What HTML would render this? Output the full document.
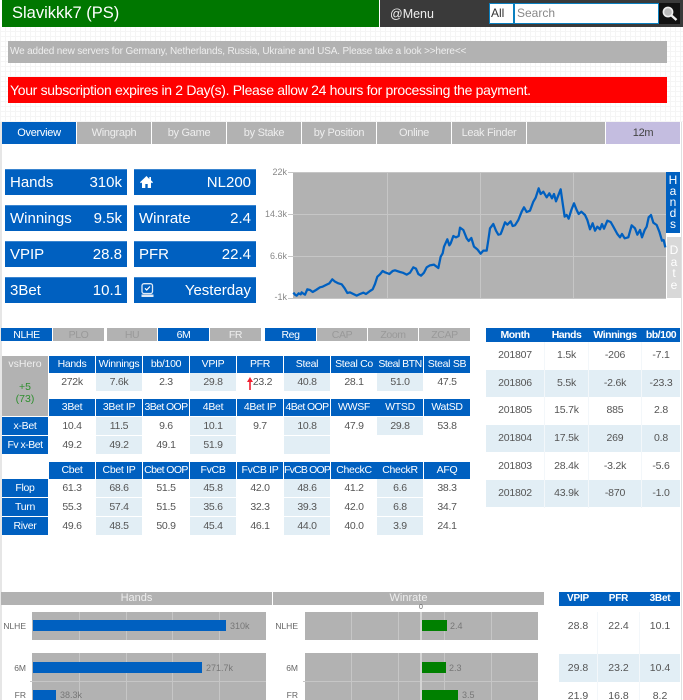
<!DOCTYPE html>
<html><head><meta charset="utf-8"><title>Slavikkk7 (PS)</title>
<style>
html,body{margin:0;padding:0;background:#fff}
body{width:683px;height:700px;position:relative;overflow:hidden;background:#fff;font-family:"Liberation Sans",sans-serif;color:#555}
#w{position:absolute;left:0;top:0;width:683px;height:700px;overflow:hidden;filter:blur(.3px)}
div{position:absolute;box-sizing:border-box;white-space:nowrap}
.tab{top:122px;height:22px;width:74px;background:#b2b2b2;color:#eee;font-size:11px;letter-spacing:-.3px;line-height:22px;text-align:center}
.st{width:122px;height:26px;background:#0060c0;color:#fff;font-size:15px;line-height:26px;padding:0 5px;border-top:1px solid #3a85d0}
.st i{position:absolute;right:5px;font-style:normal}
.f{top:328px;height:13px;width:51px;background:#0060c0;color:#fff;font-size:10.5px;letter-spacing:-.4px;line-height:14px;text-align:center}
.f.o{background:#b2b2b2;color:#999}
.h{height:17px;line-height:17px;width:46px;background:#0060c0;color:#fff;font-size:10.5px;letter-spacing:-.3px;text-align:center}
.v{height:18px;line-height:19px;width:46px;font-size:10.5px;letter-spacing:-.3px;text-align:center;color:#555}
.s{background:#e2eef5}
.l{left:2px;width:46px;height:18px;line-height:18px;background:#0060c0;color:#fff;font-size:10.5px;letter-spacing:-.3px;text-align:center}
.c0{left:49px}.c1{left:96px}.c2{left:143px}.c3{left:190px}.c4{left:237px}.c5{left:284px}.c6{left:331px}.c7{left:377px}.c8{left:424px}
.a{top:356px}.b{top:373px}.d{top:399px}.e{top:417px}.g{top:436px}.j{top:462px}.k{top:479px}.m{top:498px}.n{top:517px}
.y{font-size:9px;color:#888;text-align:right;width:30px;left:257px;line-height:10px;height:10px}
.tr{left:486px;width:194px;height:27px}
.tv{font-size:10.5px;letter-spacing:-.2px;line-height:27px;height:27px;text-align:center;color:#555}
.th{top:328px;height:14px;line-height:14px;color:#fff;font-size:10.5px;letter-spacing:-.5px;font-weight:bold;text-align:center}
.x0{left:486px;width:58px}.x1{left:545px;width:43px}.x2{left:589px;width:52px}.x3{left:642px;width:38px}
.lb{font-size:8.5px;color:#666;line-height:10px;height:10px;text-align:right}
.val{font-size:9px;color:#777;line-height:10px;height:10px}
.p{background:#b2b2b2}
.gr{background:#c6c6c6;width:1px}
.mh{top:592px;height:14px;line-height:14px;color:#fff;font-size:10px;letter-spacing:-.2px;font-weight:bold;text-align:center}
.mv{font-size:10.5px;color:#555;text-align:center}
.vt{width:14px;color:#fff;font-size:12px;text-align:center;white-space:normal}
.bh{top:592px;width:271px;height:13px;background:#b2b2b2;color:#eee;font-size:11px;line-height:13px;text-align:center}
</style></head><body><div id="w">
<div style="left:0;top:27px;width:683px;height:95px;background-color:#fff;background-image:repeating-linear-gradient(0deg,#f5f5f5 0 1px,transparent 1px 5px),repeating-linear-gradient(90deg,#f5f5f5 0 1px,transparent 1px 5px)"></div>
<div style="left:0;top:122px;width:2px;height:578px;background:#e6e6e6"></div>
<div style="left:681px;top:122px;width:1px;height:578px;background:#e0e0e0"></div>

<div style="left:2px;top:0;width:377px;height:27px;background:#007700;color:#fff;font-size:16.5px;line-height:27px;padding-left:10px">Slavikkk7 (PS)</div>
<div style="left:380px;top:0;width:303px;height:27px;background:#3a3a3a"></div>
<div style="left:390px;top:0;color:#eee;font-size:12.5px;line-height:28px">@Menu</div>
<div style="left:489px;top:3px;width:25px;height:21px;background:#fff;border:1px solid #0a80c0;color:#333;font-size:12px;line-height:19px;padding-left:1px">All</div>
<div style="left:514px;top:3px;width:145px;height:21px;background:#fff;border:1px solid #0a80c0;color:#888;font-size:12px;line-height:19px;padding-left:2px">Search</div>
<div style="left:659px;top:3px;width:21px;height:21px;background:#111"></div>
<svg style="position:absolute;left:659px;top:3px" width="21" height="21"><circle cx="9" cy="9" r="4.6" fill="#bbb" stroke="#eee" stroke-width="1.6"/><path d="M12.5 12.5L17.5 17" stroke="#eee" stroke-width="2.4"/></svg>

<div style="left:8px;top:41px;width:659px;height:22px;background:#b2b2b2;color:#eee;font-size:10px;letter-spacing:-.155px;line-height:22px;padding-left:2px">We added new servers for Germany, Netherlands, Russia, Ukraine and USA. Please take a look &gt;&gt;here&lt;&lt;</div>
<div style="left:8px;top:77px;width:659px;height:26px;background:#f00;color:#fff;font-size:14px;letter-spacing:-.32px;line-height:26px;padding-left:2px">Your subscription expires in 2 Day(s). Please allow 24 hours for processing the payment.</div>

<div class="tab" style="left:2px;background:#0060c0;color:#fff">Overview</div>
<div class="tab" style="left:77px">Wingraph</div>
<div class="tab" style="left:152px">by Game</div>
<div class="tab" style="left:227px">by Stake</div>
<div class="tab" style="left:302px">by Position</div>
<div class="tab" style="left:377px">Online</div>
<div class="tab" style="left:452px">Leak Finder</div>
<div class="tab" style="left:527px;width:78px"></div>
<div class="tab" style="left:606px;background:#c4bde0;color:#444">12m</div>

<div class="st" style="left:5px;top:169px">Hands<i>310k</i></div>
<div class="st" style="left:134px;top:169px"><i>NL200</i></div>
<svg style="position:absolute;left:139px;top:175px" width="15" height="14" viewBox="0 0 15 14"><path d="M7.5 1L1 7.3l1 1L3 7.4V13h3.3V9h2.4v4H12V7.4l1 .9 1-1-2-2V2h-1.700v2L7.500 1z" fill="#fff"/></svg>
<div class="st" style="left:5px;top:205px">Winnings<i>9.5k</i></div>
<div class="st" style="left:134px;top:205px">Winrate<i>2.4</i></div>
<div class="st" style="left:5px;top:241px">VPIP<i>28.8</i></div>
<div class="st" style="left:134px;top:241px">PFR<i>22.4</i></div>
<div class="st" style="left:5px;top:277px">3Bet<i>10.1</i></div>
<div class="st" style="left:134px;top:277px"><i>Yesterday</i></div>
<svg style="position:absolute;left:140px;top:283px" width="15" height="15" viewBox="0 0 15 15"><rect x="2" y=".7" width="10.500" height="9.800" rx="2" fill="none" stroke="#dfe9f5" stroke-width="1.300"/><path d="M5 5.300l1.700 1.700L10 3.500" fill="none" stroke="#fff" stroke-width="1.200"/><path d="M1.500 11.500h12v2.500h-12z" fill="#dfe9f5"/></svg>

<div class="p" style="left:293px;top:173px;width:373px;height:125px"></div>
<div class="gr" style="left:387px;top:173px;height:125px"></div>
<div class="gr" style="left:480px;top:173px;height:125px"></div>
<div class="gr" style="left:573px;top:173px;height:125px"></div>
<div class="gr" style="left:288px;top:214px;height:1px;width:378px"></div>
<div class="gr" style="left:288px;top:256px;height:1px;width:378px"></div>
<div class="gr" style="left:288px;top:172px;height:1px;width:378px"></div>
<div class="gr" style="left:288px;top:298px;height:1px;width:378px"></div>
<div class="y" style="top:167px">22k</div>
<div class="y" style="top:209px">14.3k</div>
<div class="y" style="top:251px">6.6k</div>
<div class="y" style="top:292px">-1k</div>
<svg style="position:absolute;left:270px;top:160px" width="413" height="150" viewBox="0 0 1239 450"><polyline fill="none" stroke="#0060c0" stroke-width="6.800" stroke-linejoin="round" points="70,398 76,405 80,407 86,400 92,403 95,397 100,401 105,404 112,388 120,390 128,396 138,390 150,382 158,380 170,374 178,370 187,358 195,365 205,370 215,373 224,385 232,399 240,397 250,402 260,407 270,402 280,398 288,402 300,393 308,388 315,372 322,350 330,343 338,333 345,337 358,342 368,333 375,331 390,336 398,338 410,344 420,338 430,322 438,326 445,342 453,347 462,338 470,322 480,316 492,314 505,324 512,290 518,280 522,260 532,238 538,256 542,250 550,228 558,232 566,228 570,203 580,210 590,235 596,243 604,234 612,260 622,268 632,281 640,272 650,272 655,240 660,205 670,192 678,212 685,224 692,222 696,212 705,187 712,194 722,184 728,198 735,196 745,180 755,155 762,142 770,156 780,152 790,125 797,113 806,85 812,102 820,95 830,112 838,100 846,115 852,102 858,124 872,88 878,130 884,170 890,165 896,176 904,150 912,130 920,150 926,162 934,155 945,165 952,180 960,208 968,190 975,212 982,200 990,208 996,192 1002,206 1012,182 1022,186 1030,200 1042,222 1050,232 1056,222 1064,235 1075,232 1085,196 1095,205 1102,224 1110,210 1116,232 1124,210 1130,200 1136,172 1143,165 1150,188 1160,195 1168,215 1176,242 1181,240 1186,262"/></svg>
<div class="vt" style="left:666px;top:172px;height:61px;background:#0060c0;padding-top:3px;line-height:11px">H<br>a<br>n<br>d<br>s</div>
<div class="vt" style="left:667px;top:237px;height:61px;background:#d8d8d8;padding-top:8px;line-height:11.7px">D<br>a<br>t<br>e</div>

<div class="f" style="left:1px">NLHE</div><div class="f o" style="left:53px">PLO</div>
<div class="f o" style="left:107px;width:50px">HU</div><div class="f" style="left:158px">6M</div><div class="f o" style="left:210px;color:#eee">FR</div>
<div class="f" style="left:265px">Reg</div><div class="f o" style="left:317px;width:50px">CAP</div><div class="f o" style="left:368px;width:50px">Zoom</div><div class="f o" style="left:419px">ZCAP</div>

<div style="left:2px;top:356px;width:46px;height:60px;background:#b2b2b2;color:#eee;font-size:10.5px;text-align:center;line-height:16px">vsHero</div>
<div style="left:2px;top:381px;width:46px;color:#2f8f2f;font-size:10.5px;text-align:center;line-height:12px">+5<br>(73)</div>

<div class="h a c0">Hands</div><div class="h a c1">Winnings</div><div class="h a c2">bb/100</div><div class="h a c3">VPIP</div><div class="h a c4">PFR</div><div class="h a c5">Steal</div><div class="h a c6">Steal Co</div><div class="h a c7" style="letter-spacing:-.5px">Steal BTN</div><div class="h a c8">Steal SB</div>
<div class="v b c0">272k</div><div class="v b c1 s">7.6k</div><div class="v b c2">2.3</div><div class="v b c3 s">29.8</div><div class="v b c4" style="padding-left:5px">23.2</div><div class="v b c5 s">40.8</div><div class="v b c6">28.1</div><div class="v b c7 s">51.0</div><div class="v b c8">47.5</div>
<svg style="position:absolute;left:246px;top:376px" width="8" height="14" viewBox="0 0 8 14"><path d="M4 1L1 6h2.200v8h1.600V6H7z" fill="#f02030"/></svg>

<div class="h d c0">3Bet</div><div class="h d c1">3Bet IP</div><div class="h d c2" style="letter-spacing:-.6px">3Bet OOP</div><div class="h d c3">4Bet</div><div class="h d c4">4Bet IP</div><div class="h d c5" style="letter-spacing:-.6px">4Bet OOP</div><div class="h d c6">WWSF</div><div class="h d c7">WTSD</div><div class="h d c8">WatSD</div>
<div class="l e">x-Bet</div><div class="v e c0">10.4</div><div class="v e c1 s">11.5</div><div class="v e c2">9.6</div><div class="v e c3 s">10.1</div><div class="v e c4">9.7</div><div class="v e c5 s">10.8</div><div class="v e c6">47.9</div><div class="v e c7 s">29.8</div><div class="v e c8">53.8</div>
<div class="l g" style="letter-spacing:-.5px">Fv x-Bet</div><div class="v g c0">49.2</div><div class="v g c1 s">49.2</div><div class="v g c2">49.1</div><div class="v g c3 s">51.9</div><div class="v g c5 s"></div>

<div class="h j c0">Cbet</div><div class="h j c1">Cbet IP</div><div class="h j c2" style="letter-spacing:-.6px">Cbet OOP</div><div class="h j c3">FvCB</div><div class="h j c4">FvCB IP</div><div class="h j c5" style="letter-spacing:-.8px">FvCB OOP</div><div class="h j c6">CheckC</div><div class="h j c7">CheckR</div><div class="h j c8">AFQ</div>
<div class="l k">Flop</div><div class="v k c0">61.3</div><div class="v k c1 s">68.6</div><div class="v k c2">51.5</div><div class="v k c3 s">45.8</div><div class="v k c4">42.0</div><div class="v k c5 s">48.6</div><div class="v k c6">41.2</div><div class="v k c7 s">6.6</div><div class="v k c8">38.3</div>
<div class="l m">Turn</div><div class="v m c0">55.3</div><div class="v m c1 s">57.4</div><div class="v m c2">51.5</div><div class="v m c3 s">35.6</div><div class="v m c4">32.3</div><div class="v m c5 s">39.3</div><div class="v m c6">42.0</div><div class="v m c7 s">6.8</div><div class="v m c8">34.7</div>
<div class="l n">River</div><div class="v n c0">49.6</div><div class="v n c1 s">48.5</div><div class="v n c2">50.9</div><div class="v n c3 s">45.4</div><div class="v n c4">46.1</div><div class="v n c5 s">44.0</div><div class="v n c6">40.0</div><div class="v n c7 s">3.9</div><div class="v n c8">24.1</div>

<div style="left:486px;top:328px;width:194px;height:14px;background:#0060c0"></div>
<div class="th x0">Month</div>
<div class="th x1">Hands</div>
<div class="th x2">Winnings</div>
<div class="th x3">bb/100</div>

<div class="tr s" style="top:370px"></div><div class="tr s" style="top:425px"></div><div class="tr s" style="top:480px"></div>
<div style="left:544px;top:342px;width:1px;height:166px;background:#f3f7fa"></div><div style="left:588px;top:342px;width:1px;height:166px;background:#f3f7fa"></div><div style="left:641px;top:342px;width:1px;height:166px;background:#f3f7fa"></div>

<div class="tv x0" style="top:342px">201807</div><div class="tv x1" style="top:342px">1.5k</div><div class="tv x2" style="top:342px">-206</div><div class="tv x3" style="top:342px">-7.1</div>
<div class="tv x0" style="top:370px">201806</div><div class="tv x1" style="top:370px">5.5k</div><div class="tv x2" style="top:370px">-2.6k</div><div class="tv x3" style="top:370px">-23.3</div>
<div class="tv x0" style="top:397px">201805</div><div class="tv x1" style="top:397px">15.7k</div><div class="tv x2" style="top:397px">885</div><div class="tv x3" style="top:397px">2.8</div>
<div class="tv x0" style="top:425px">201804</div><div class="tv x1" style="top:425px">17.5k</div><div class="tv x2" style="top:425px">269</div><div class="tv x3" style="top:425px">0.8</div>
<div class="tv x0" style="top:453px">201803</div><div class="tv x1" style="top:453px">28.4k</div><div class="tv x2" style="top:453px">-3.2k</div><div class="tv x3" style="top:453px">-5.6</div>
<div class="tv x0" style="top:480px">201802</div><div class="tv x1" style="top:480px">43.9k</div><div class="tv x2" style="top:480px">-870</div><div class="tv x3" style="top:480px">-1.0</div>

<div class="bh" style="left:1px">Hands</div>
<div class="bh" style="left:273px">Winrate</div>

<div class="p" style="left:32px;top:612px;width:234px;height:28px"></div>
<div class="p" style="left:32px;top:653px;width:234px;height:47px"></div>
<div class="gr" style="left:79px;top:612px;height:28px"></div><div class="gr" style="left:126px;top:612px;height:28px"></div><div class="gr" style="left:172px;top:612px;height:28px"></div><div class="gr" style="left:219px;top:612px;height:28px"></div>
<div class="gr" style="left:79px;top:653px;height:47px"></div><div class="gr" style="left:126px;top:653px;height:47px"></div><div class="gr" style="left:172px;top:653px;height:47px"></div><div class="gr" style="left:219px;top:653px;height:47px"></div>
<div class="gr" style="left:30px;top:681px;height:1px;width:236px"></div>
<div style="left:33px;top:620px;width:193px;height:11px;background:#0060c0"></div>
<div style="left:33px;top:662px;width:169px;height:11px;background:#0060c0"></div>
<div style="left:33px;top:690px;width:23px;height:10px;background:#0060c0"></div>
<div class="lb" style="left:0;top:621px;width:26px">NLHE</div><div class="lb" style="left:0;top:663px;width:26px">6M</div><div class="lb" style="left:0;top:690px;width:26px">FR</div>
<div class="val" style="left:230px;top:621px">310k</div><div class="val" style="left:206px;top:663px">271.7k</div><div class="val" style="left:60px;top:690px">38.3k</div>

<div class="p" style="left:305px;top:612px;width:233px;height:28px"></div>
<div class="p" style="left:305px;top:653px;width:233px;height:47px"></div>
<div class="gr" style="left:351px;top:612px;height:28px"></div><div class="gr" style="left:398px;top:612px;height:28px"></div><div class="gr" style="left:444px;top:612px;height:28px"></div><div class="gr" style="left:491px;top:612px;height:28px"></div>
<div class="gr" style="left:351px;top:653px;height:47px"></div><div class="gr" style="left:398px;top:653px;height:47px"></div><div class="gr" style="left:444px;top:653px;height:47px"></div><div class="gr" style="left:491px;top:653px;height:47px"></div>
<div class="gr" style="left:303px;top:681px;height:1px;width:235px"></div>
<div style="left:420px;top:612px;width:2px;height:28px;background:#d4d4d4"></div><div style="left:420px;top:653px;width:2px;height:47px;background:#d4d4d4"></div>
<div style="left:422px;top:620px;width:25px;height:11px;background:#008000"></div>
<div style="left:422px;top:662px;width:24px;height:11px;background:#008000"></div>
<div style="left:422px;top:690px;width:36px;height:10px;background:#008000"></div>
<div class="lb" style="left:272px;top:621px;width:26px">NLHE</div><div class="lb" style="left:272px;top:663px;width:26px">6M</div><div class="lb" style="left:272px;top:690px;width:26px">FR</div>
<div class="val" style="left:450px;top:621px">2.4</div><div class="val" style="left:449px;top:663px">2.3</div><div class="val" style="left:462px;top:690px">3.5</div>
<div style="left:416px;top:604px;width:10px;text-align:center;font-size:7px;line-height:8px;color:#666">0</div>

<div style="left:559px;top:592px;width:121px;height:14px;background:#0060c0"></div>
<div class="mh" style="left:559px;width:38px">VPIP</div><div class="mh" style="left:598px;width:41px">PFR</div><div class="mh" style="left:640px;width:40px">3Bet</div>
<div class="s" style="left:559px;top:654px;width:121px;height:28px"></div>
<div style="left:597px;top:612px;width:1px;height:88px;background:#f3f7fa"></div><div style="left:639px;top:612px;width:1px;height:88px;background:#f3f7fa"></div>
<div class="mv" style="left:559px;top:612px;width:38px;line-height:28px">28.8</div><div class="mv" style="left:598px;top:612px;width:41px;line-height:28px">22.4</div><div class="mv" style="left:640px;top:612px;width:40px;line-height:28px">10.1</div>
<div class="mv" style="left:559px;top:654px;width:38px;line-height:28px">29.8</div><div class="mv" style="left:598px;top:654px;width:41px;line-height:28px">23.2</div><div class="mv" style="left:640px;top:654px;width:40px;line-height:28px">10.4</div>
<div class="mv" style="left:559px;top:682px;width:38px;line-height:28px">21.9</div><div class="mv" style="left:598px;top:682px;width:41px;line-height:28px">16.8</div><div class="mv" style="left:640px;top:682px;width:40px;line-height:28px">8.2</div>
</div></body></html>
